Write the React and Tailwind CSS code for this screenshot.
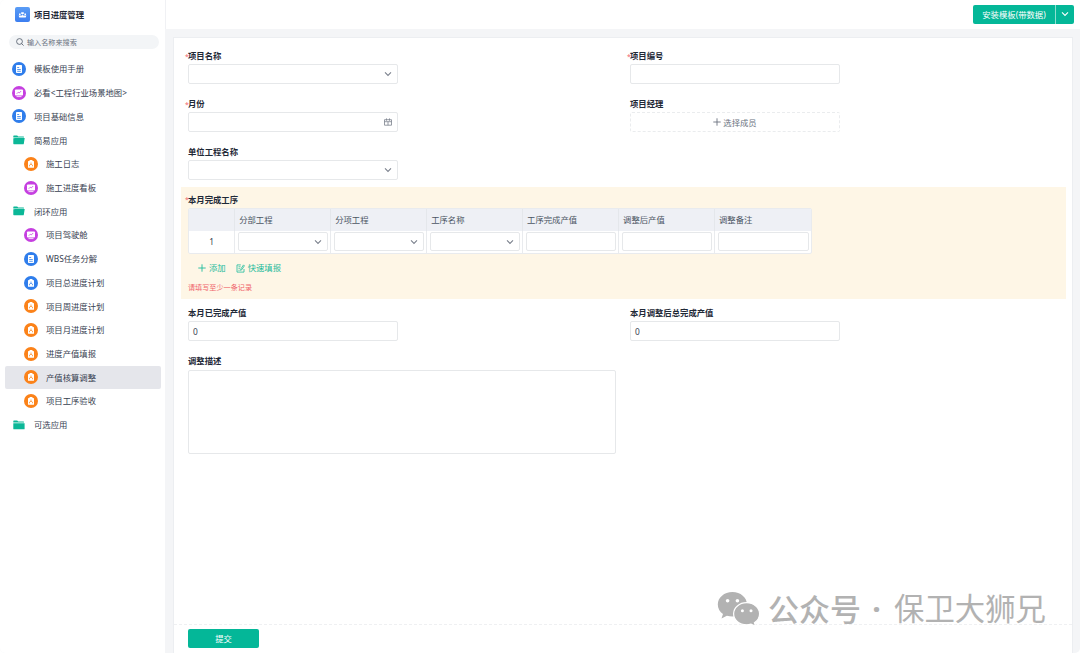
import React, { useState } from 'react';

const MENU = [
  { id: 1, label: '模板使用手册', icon: 'doc', color: 'blue', level: 0 },
  { id: 2, label: '必看<工程行业场景地图>', icon: 'board', color: 'purple', level: 0 },
  { id: 3, label: '项目基础信息', icon: 'doc', color: 'blue', level: 0 },
  { id: 4, label: '简易应用', icon: 'folderOpen', level: 0 },
  { id: 5, label: '施工日志', icon: 'flow', color: 'orange', level: 1 },
  { id: 6, label: '施工进度看板', icon: 'board', color: 'purple', level: 1 },
  { id: 7, label: '闭环应用', icon: 'folderOpen', level: 0 },
  { id: 8, label: '项目驾驶舱', icon: 'board', color: 'purple', level: 1 },
  { id: 9, label: 'WBS任务分解', icon: 'doc', color: 'blue', level: 1 },
  { id: 10, label: '项目总进度计划', icon: 'flow', color: 'blue', level: 1 },
  { id: 11, label: '项目周进度计划', icon: 'flow', color: 'orange', level: 1 },
  { id: 12, label: '项目月进度计划', icon: 'flow', color: 'orange', level: 1 },
  { id: 13, label: '进度产值填报', icon: 'flow', color: 'orange', level: 1 },
  { id: 14, label: '产值核算调整', icon: 'flow', color: 'orange', level: 1 },
  { id: 15, label: '项目工序验收', icon: 'flow', color: 'orange', level: 1 },
  { id: 16, label: '可选应用', icon: 'folder', level: 0 },
];

const COLORS = {
  blue: 'bg-[#2f7deb] text-[#2f7deb]',
  purple: 'bg-[#c53fe0] text-[#c53fe0]',
  orange: 'bg-[#fb8219] text-[#fb8219]',
};

const COLUMNS = [
  { title: '分部工程', select: true },
  { title: '分项工程', select: true },
  { title: '工序名称', select: true },
  { title: '工序完成产值' },
  { title: '调整后产值' },
  { title: '调整备注' },
];

const Chevron = ({ className = 'text-[#7b818d]' }) => (
  <svg viewBox="0 0 8 8" className={`h-2 w-2 shrink-0 ${className}`} fill="none" stroke="currentColor" strokeWidth="1.1">
    <path d="M1 2.4 4 5.4 7 2.4" />
  </svg>
);

const Plus = () => (
  <svg viewBox="0 0 8 8" className="h-2 w-2 shrink-0" stroke="currentColor" strokeWidth="0.9">
    <path d="M4 .3v7.4M.3 4h7.4" />
  </svg>
);

const Folder = ({ open }) => (
  <svg viewBox="0 0 12 10" className="h-2.5 w-3" fill="#0bb797">
    <path d="M.3 1.2Q.3.6.9.6h3.3l1 1h5.3q.5 0 .5.5v.5H.3z" />
    {open ? <path d="M.3 3.2h.9l.4-.1h10.1l-.9 5.6q-.1.5-.6.5H.9q-.6 0-.6-.6z" /> : <path d="M.3 3.2h11.3v5.5q0 .5-.5.5H.9q-.6 0-.6-.5z" />}
  </svg>
);

const MenuIcon = ({ item }) => {
  if (!item.color) {
    return (
      <span className="flex w-3.5 justify-center">
        <Folder open={item.icon === 'folderOpen'} />
      </span>
    );
  }
  return (
    <span className={`flex h-3.5 w-3.5 items-center justify-center rounded-full ${COLORS[item.color]}`}>
      <svg viewBox="0 0 14 14" className="h-3.5 w-3.5">
        {item.icon === 'doc' && (
          <>
            <rect x="4" y="3" width="6" height="8" rx="0.8" fill="#fff" />
            <path d="M5.2 5.5h2M5.2 7.5h3.6M5.2 9.3h3.6" stroke="currentColor" strokeWidth="0.8" />
          </>
        )}
        {item.icon === 'board' && (
          <>
            <rect x="3" y="3.5" width="8" height="6" rx="0.8" fill="#fff" />
            <path d="M4.5 10.600h5" stroke="#fff" strokeWidth="0.8" />
            <path d="M4.8 7.700 6.300 6.200l.9.800 2-2" fill="none" stroke="currentColor" strokeWidth="0.8" />
          </>
        )}
        {item.icon === 'flow' && (
          <>
            <rect x="4" y="4" width="6" height="6.800" rx="0.6" fill="#fff" />
            <rect x="5.500" y="3" width="3" height="1.500" rx="0.3" fill="#fff" />
            <path d="M7 5.500v1.700M5.500 9.300V8.100L7 7.200l1.500.9v1.200" fill="none" stroke="currentColor" strokeWidth="0.7" />
          </>
        )}
      </svg>
    </span>
  );
};

const Label = ({ required, children }) => (
  <div className="flex h-4 items-center font-bold text-[#1f2937]">
    {required && <span className="-ml-[3px] w-[3px] text-[7px] font-normal text-[#f0646a]">*</span>}
    {children}
  </div>
);

const Field = ({ label, required, children }) => (
  <div className="h-[48.2px] w-[442px]">
    <Label required={required}>{label}</Label>
    {children}
  </div>
);

const Box = ({ children, value }) => (
  <div className="flex h-5 w-[210px] items-center justify-between rounded-[2px] border border-[#e6e8ea] bg-white pr-[5px] pl-1">
    <span className="pt-px">{value}</span>
    {children}
  </div>
);

const Sidebar = ({ active, onSelect }) => (
  <aside className="w-[165px] shrink-0 bg-white">
    <div className="flex h-[29px] items-center pl-[15px]">
      <span className="flex h-[15px] w-[15px] items-center justify-center rounded-[2px] bg-linear-to-b from-[#5a9cf5] to-[#3c7ef0]">
        <svg viewBox="0 0 9 8" className="h-2 w-[9px]" fill="#fff">
          <path d="M3.200 1.200h2.600v1.900H3.200zM1 2.400h1.600v1.500H1zM6.400 2.400H8v1.500H6.400zM.6 4.400h3.500v-.8h.8v.8h3.500l-.7 2.200H1.300z" />
        </svg>
      </span>
      <span className="ml-1 pt-px font-bold text-[#1f2937]">项目进度管理</span>
    </div>
    <div className="mt-1.5 ml-[9px] flex h-3.5 w-[150px] items-center rounded-full bg-[#f3f5f7] pl-[7px]">
      <svg viewBox="0 0 8 8" className="h-2 w-2" fill="none" stroke="#4b5563" strokeWidth="0.8">
        <circle cx="3.5" cy="3.5" r="2.9" />
        <path d="m5.6 5.6 2 2" />
      </svg>
      <span className="ml-[3px] pt-px text-[7.14px] text-[#6b7280]">输入名称来搜索</span>
    </div>
    <nav className="mt-[8.2px] pl-[5px]">
      {MENU.map((item) => (
        <div
          key={item.id}
          onClick={() => onSelect(item.id)}
          className={`flex h-[23.73px] w-[156px] cursor-pointer items-center gap-2 rounded-[2px] ${
            item.level ? 'pl-[19px]' : 'pl-[7px]'
          } ${active === item.id ? 'bg-[#e5e6eb]' : ''}`}
        >
          <MenuIcon item={item} />
          <span className="pt-px">{item.label}</span>
        </div>
      ))}
    </nav>
  </aside>
);

const ProcessTable = () => (
  <div className="w-[624px] overflow-hidden rounded-[2px] border border-[#e9ebee] bg-white">
    <div className="flex h-[22px] bg-[#eef0f5]">
      <div className="w-[46.3px] border-r border-[#e4e7eb]" />
      {COLUMNS.map((col) => (
        <div key={col.title} className="flex w-[96.2px] items-center border-r border-[#e4e7eb] pl-1 text-[#4b5563] last:border-r-0">
          {col.title}
        </div>
      ))}
    </div>
    <div className="flex h-[22px]">
      <div className="flex w-[46.3px] items-center justify-center border-r border-[#e9ebee] pt-px">1</div>
      {COLUMNS.map((col) => (
        <div key={col.title} className="flex w-[96.2px] items-center border-r border-[#e9ebee] px-[2.5px] last:border-r-0">
          <div className="flex h-[19px] w-full items-center justify-end rounded-[2px] border border-[#e6e8ea] px-[5px]">
            {col.select && <Chevron />}
          </div>
        </div>
      ))}
    </div>
  </div>
);

const Watermark = () => (
  <div className="absolute top-[589px] left-[717px] flex h-10 items-center text-[30.4px] text-[#b2b2b2]">
    <svg viewBox="0 0 44 36" className="h-9 w-11 shrink-0" fill="currentColor">
      <path d="M15.4 1C7.2 1 .8 6.500 .8 13.500c0 3.900 2 7.300 5.200 9.600l-1.500 4.300 5.400-2.600c1.700.5 3.500.8 5.500.8C23.400 25.600 30 20.400 30 13.500 30 6.500 23.600 1 15.400 1z" />
      <path stroke="#fff" strokeWidth="1.200" d="M29.600 11.700c-7.200 0-13 4.900-13 11.100s5.800 11 13 11c1.600 0 3-.2 4.400-.6l4.700 2.200-1.300-3.700c3.200-2 5.200-5.200 5.200-8.900 0-6.200-5.800-11.100-13-11.100z" />
      <circle cx="10.600" cy="9.800" r="1.800" fill="#fff" />
      <circle cx="20.400" cy="9.800" r="1.800" fill="#fff" />
      <circle cx="25.400" cy="19.800" r="1.500" fill="#fff" />
      <circle cx="34" cy="19.800" r="1.500" fill="#fff" />
    </svg>
    <span className="ml-[7px] w-[93px] text-[31px] font-medium">公众号</span>
    <span className="w-[31px] text-center font-bold">·</span>
    <span className="ml-0.5">保卫大狮兄</span>
  </div>
);

export default function App() {
  const [active, setActive] = useState(14);

  return (
    <div className="relative flex h-[653px] w-[1080px] overflow-hidden rounded-[5px] bg-[#f4f5f7] font-['Noto_Sans','Noto_Sans_CJK_SC',sans-serif] text-[8.36px] leading-none whitespace-nowrap text-[#374151]">
      <Sidebar active={active} onSelect={setActive} />
      <div className="flex min-w-0 flex-1 flex-col">
        <header className="flex h-[28.5px] shrink-0 items-center justify-end border-l border-[#f0f1f4] bg-white pr-1.5">
          <div className="flex h-[19px] overflow-hidden rounded-[2px] bg-[#04b798] text-white">
            <span className="flex w-[82px] items-center justify-center pt-px">安装模板(带数据)</span>
            <span className="flex w-[19px] items-center justify-center border-l border-[#8edfd0]">
              <Chevron className="text-white" />
            </span>
          </div>
        </header>

        <main className="mt-2 mr-[7px] ml-2 flex flex-1 flex-col border border-b-0 border-[#eceef1] bg-white">
          <div className="flex-1 pt-[10.5px] pl-[7px]">
            {/* champs du haut */}
            <div className="pl-[7px]">
              <div className="flex">
                <Field label="项目名称" required>
                  <Box><Chevron /></Box>
                </Field>
                <Field label="项目编号" required>
                  <Box />
                </Field>
              </div>
              <div className="flex">
                <Field label="月份" required>
                  <Box>
                    <svg viewBox="0 0 8 8" className="h-2 w-2" fill="none" stroke="#7b818d" strokeWidth="0.8">
                      <path d="M.5 1.700h7v5.500h-7zM.5 3.700h7M2.500.4v2.300M5.500.4v2.300M4 3.700v3.500" />
                    </svg>
                  </Box>
                </Field>
                <Field label="项目经理">
                  <div className="flex h-5 w-[210px] items-center justify-center gap-0.5 rounded-[2px] border border-dashed border-[#eaecee] text-[#6b7280]">
                    <Plus />
                    <span className="pt-px">选择成员</span>
                  </div>
                </Field>
              </div>
              <Field label="单位工程名称">
                <Box><Chevron /></Box>
              </Field>
            </div>

            <section className="-mt-[5.600px] h-[112px] w-[885px] bg-[#fef6e6] pt-[5px] pl-[7px]">
              <Label required>本月完成工序</Label>
              <ProcessTable />
              <div className="mt-2.5 flex items-center pl-2.5 text-[#1dbb9c]">
                <Plus />
                <span className="ml-[3px]">添加</span>
                <svg viewBox="0 0 9 9" className="ml-2.5 h-[9px] w-[9px]" fill="none" stroke="currentColor" strokeWidth="0.8">
                  <path d="M4.800.900H1v7.200h7V5M2.500 2.800h2M2.500 4.600h1.300M2.500 6.400h1M4.600 6.400l.3-1.500L7.500.900l.9.900-2.700 4z" />
                </svg>
                <span className="ml-[3px]">快速填报</span>
              </div>
              <div className="mt-[11px] text-[7.14px] text-[#f0646a]">请填写至少一条记录</div>
            </section>

            <div className="pt-[6.400px] pl-[7px]">
              <div className="flex">
                <Field label="本月已完成产值">
                  <Box value="0" />
                </Field>
                <Field label="本月调整后总完成产值">
                  <Box value="0" />
                </Field>
              </div>
              <Label>调整描述</Label>
              <div className="h-[84px] w-[428px] rounded-[2px] border border-[#e6e8ea]" />
            </div>
          </div>

          <footer className="h-[29px] shrink-0 border-t border-dashed border-[#eff0f2] pt-1 pl-3.5">
            <button className="flex h-[19px] w-[71px] items-center justify-center rounded-[2px] bg-[#04b798] pt-px text-white">提交</button>
          </footer>
        </main>
      </div>
      <Watermark />
    </div>
  );
}
